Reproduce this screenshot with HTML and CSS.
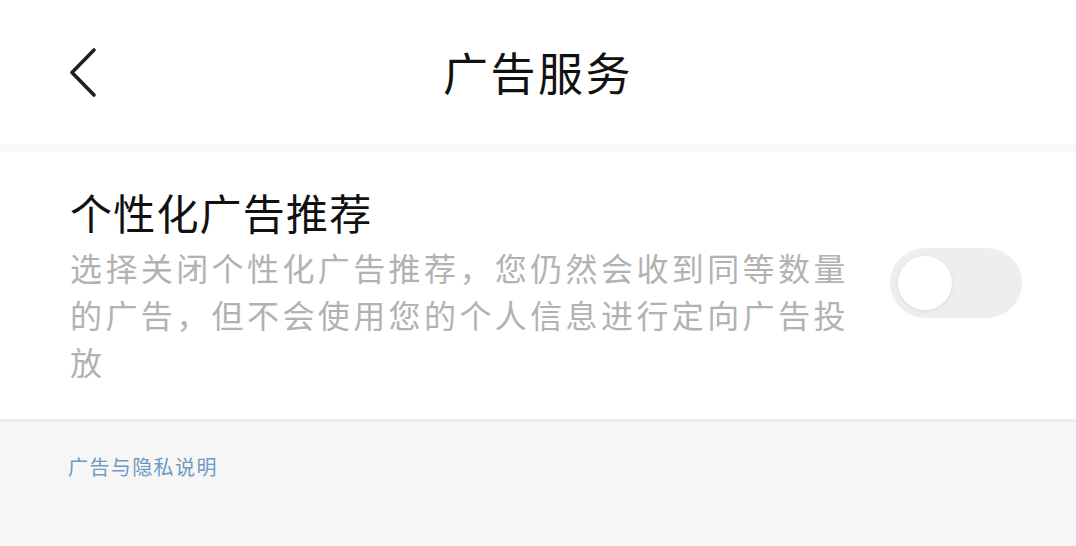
FILE: index.html
```html
<!DOCTYPE html>
<html lang="zh-CN">
  <head>
    <meta charset="UTF-8" />
    <meta name="viewport" content="width=device-width, initial-scale=1.0" />
    <title>广告服务</title>
    <link rel="stylesheet" href="styles.css">
  </head>
  <body>
    <header class="top-bar">
      <button class="back-btn" type="button" aria-label="返回">
        <svg width="30" height="52" viewBox="0 0 30 52">
          <polyline points="25,3 3,25.5 25,48" fill="none" stroke="#1f1f1f" stroke-width="3.6" stroke-linecap="round" stroke-linejoin="round" />
        </svg>
      </button>
      <h1 class="page-title">广告服务</h1>
      <div></div>
    </header>
    <div class="spacer"></div>
    <section class="setting-card">
      <div class="setting-text">
        <h2 class="setting-title">个性化广告推荐</h2>
        <p class="setting-desc">选择关闭个性化广告推荐，您仍然会收到同等数量的广告，但不会使用您的个人信息进行定向广告投放</p>
      </div>
      <div class="toggle" role="switch" aria-checked="false">
        <span class="knob"></span>
      </div>
    </section>
    <footer class="bottom-area">
      <a class="privacy-link" href="#">广告与隐私说明</a>
    </footer>
  </body>
</html>
```

FILE: styles.css
```css
html,
body {
  margin: 0;
  height: 100%;
}
body {
  font-family: "Noto Sans CJK SC", "Noto Sans", sans-serif;
  background-color: #f6f6f6;
  display: flex;
  flex-direction: column;
}
.top-bar {
  height: 144px;
  background-color: #fff;
  display: grid;
  grid-template-columns: 1fr auto 1fr;
  align-items: center;
}
.back-btn {
  justify-self: start;
  margin-left: 69px;
  margin-top: 1px;
  padding: 0;
  border: none;
  background: none;
  display: flex;
}
.page-title {
  margin: 0;
  font-size: 45px;
  font-weight: 400;
  letter-spacing: 2.5px;
  color: #111;
  line-height: 52px;
}
.spacer {
  height: 8px;
  background-color: #f8f8f8;
}
.setting-card {
  background-color: #fff;
  display: flex;
  align-items: center;
  justify-content: space-between;
  padding: 36px 54px 34px 70px;
}
.setting-text {
  width: 790px;
}
.setting-title {
  margin: 0;
  font-size: 42px;
  font-weight: 400;
  letter-spacing: 1.2px;
  line-height: 48px;
  color: #111;
}
.setting-desc {
  margin: 8px 0 0;
  font-size: 32px;
  letter-spacing: 3.4px;
  line-height: 47px;
  color: #b2b2b2;
}
.toggle {
  width: 132px;
  height: 70px;
  border-radius: 35px;
  background-color: #eeeeee;
  display: flex;
  align-items: center;
  padding-left: 8px;
  box-sizing: border-box;
  margin-bottom: 8px;
}
.knob {
  width: 54px;
  height: 54px;
  border-radius: 50%;
  background-color: #fff;
  box-shadow: 0 1px 4px rgba(0, 0, 0, 0.08);
}
.bottom-area {
  flex: 1;
  border-top: 3px solid #ececec;
  padding: 33px 68px;
}
.privacy-link {
  font-size: 20px;
  letter-spacing: 1.4px;
  line-height: 24px;
  color: #6d9bc3;
  text-decoration: none;
}
```
